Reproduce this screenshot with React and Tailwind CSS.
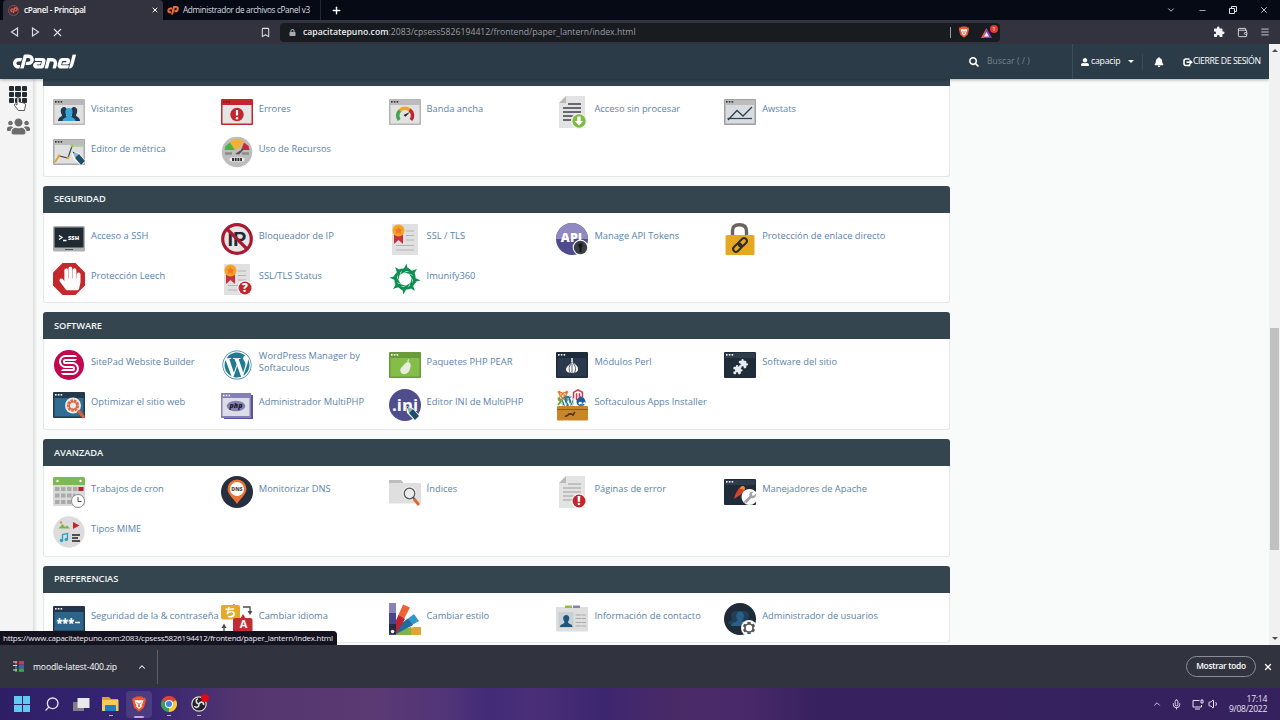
import React from 'react';
import {
  FaWordpress, FaHandPaper, FaUsers, FaSearch, FaBell, FaLock, FaWrench, FaCog,
  FaJoomla, FaMagento, FaDrupal, FaUserAlt,
} from 'react-icons/fa';
import { SiCpanel } from 'react-icons/si';
import { MdExtension } from 'react-icons/md';
import { Bookmark, X, Minus, ChevronDown, ChevronUp, Plus, Menu, Wallet, Mic, Search, Volume1 } from 'lucide-react';

// Small browser window used as the base of many icons
function Win({ frame, bar, body, dots = '#333', children }) {
  return (
    <>
      <rect x="0" y="3" width="32" height="26" rx="1" fill={frame} />
      <rect x="1" y="4" width="30" height="5" fill={bar} />
      <rect x="1.5" y="9" width="29" height="18.5" fill={body} />
      <g fill={dots}>
        <rect x="2" y="5" width="1.6" height="1.6" />
        <rect x="4.8" y="5" width="1.6" height="1.6" />
        <rect x="7.6" y="5" width="1.6" height="1.6" />
      </g>
      {children}
    </>
  );
}

function Sheet({ lines = '#b5b5b5', fold = true }) {
  return (
    <>
      <path d={fold ? 'M10 0H29V32H3V7Z' : 'M4 0H30V32H4Z'} fill="#e3e3e3" />
      {fold && <path d="M10 0V7H3Z" fill="#b9b9b9" />}
      <path d="M12 8H25M7 12H25M7 16H25M7 20H25M7 24H25" stroke={lines} strokeWidth="1.4" />
    </>
  );
}

function Certificate() {
  return (
    <>
      <rect x="3" y="1" width="26" height="31" rx="1" fill="#e0e0e0" />
      <path d="M17 8H25M17 12.500H25M17 17H25M7 22.500H25M7 27H25" stroke="#b3b3b3" strokeWidth="1.2" />
      <path d="M5 10H14V21L9.500 17L5 21Z" fill="#c9303a" />
      <circle cx="9.500" cy="7.500" r="6" fill="#f5a623" />
      <path d="M9.500 3.500L10.800 6.200L13.600 6.400L11.500 8.400L12.200 11.200L9.500 9.700L6.800 11.200L7.500 8.400L5.400 6.400L8.200 6.200Z" fill="#f0762c" />
    </>
  );
}

function Badge({ char }) {
  return (
    <>
      <circle cx="24" cy="25" r="7.600" fill="#fff" />
      <circle cx="24" cy="25" r="6.500" fill="#c4262e" />
      <text x="24" y="29.200" textAnchor="middle" fontSize="11.500" fontWeight="800" fill="#fff">{char}</text>
    </>
  );
}

function Pencil({ x = 0, y = 0 }) {
  return (
    <g transform={`translate(${x} ${y})`}>
      <path d="M19 15L26 17L33 25L28 30L20 22Z" fill="#fff" />
      <path d="M23 20L26 18L32 25L28 29L22 22Z" fill="#1f4e68" />
      <path d="M19.500 15.500L26 18L22 22Z" fill="#8fb3bd" />
      <path d="M19.500 15.500L21.500 16.300L20.300 17.600Z" fill="#20343f" />
    </g>
  );
}

function BraveLogo({ size }) {
  return (
    <svg width={size} height={size} viewBox="0 0 16 16" className="shrink-0">
      <path d="M5 0.500H11L12.500 2L14 1.800L15 4L14.500 5.500L13 11.500L8 15.800L3 11.500L1.500 5.500L1 4L2 1.800L3.500 2Z" fill="#f0562f" />
      <path d="M3.500 4.500L6 4L8 4.500L10 4L12.500 4.500L11.500 7.500L10.500 9L11 10.500L8 13L5 10.500L5.500 9L4.500 7.500Z" fill="#fff" />
      <path d="M5 6L7 7L6.500 8ZM11 6L9 7L9.500 8ZM7.500 7H8.500L9 10.500L8 11.200L7 10.500Z" fill="#f0562f" />
    </svg>
  );
}

function CpIcon({ size, color }) {
  return (
    <svg width={size} height={size} viewBox="0 0 12 12" className="shrink-0" fill="none" stroke={color} strokeWidth="2.1">
      <path d="M5.300 4.500H3.300Q1.800 4.500 1.400 6.200T2.600 8.300H4" />
      <path d="M5 10.500L7 3H9Q11.200 3 10.700 5.200T8.300 7.300H7.300" />
    </svg>
  );
}

const icons = {
  visitors: (
    <Win frame="#b8b8b8" bar="#b8b8b8" body="#e0e0e0">
      <path d="M5 25C5 21 9 21 9 19C6.500 15 8 11 11 11C14 11 15 15 13 19L16 25ZM27 25C27 21 23 21 23 19C25.500 15 24 11 21 11C18 11 17 15 19 19L16 25Z" fill="#20394d" />
      <path d="M9.500 25C9.500 21.500 14 22 14 20C11 16.500 12.500 12 16 12C19.500 12 21 16.500 18 20C18 22 22.500 21.500 22.500 25Z" fill="#35a5dc" />
    </Win>
  ),
  errors: (
    <Win frame="#c4262e" bar="#c4262e" body="#e5e5e5" dots="#7c1419">
      <circle cx="16" cy="18.500" r="6.700" fill="#c4262e" />
      <path d="M16 14V19.500" stroke="#fff" strokeWidth="2.200" />
      <circle cx="16" cy="22.200" r="1.200" fill="#fff" />
    </Win>
  ),
  bandwidth: (
    <Win frame="#b5b5b5" bar="#bcbcbc" body="#e2e2e2">
      <g fill="none" strokeWidth="3.500">
        <path d="M10.200 24A7 7 0 0 1 11 14.500" stroke="#3fa54a" />
        <path d="M11 14.500A7 7 0 0 1 20.500 13.800" stroke="#efa52a" />
        <path d="M20.500 13.800A7 7 0 0 1 22 24" stroke="#c4262e" />
      </g>
      <path d="M14.500 19L21 16L16.500 20.800Z" fill="#222" />
    </Win>
  ),
  rawAccess: (
    <>
      <Sheet lines="#3e434b" />
      <circle cx="23" cy="25" r="8" fill="#f2f2f2" />
      <circle cx="23" cy="25" r="6.700" fill="#7dbb42" />
      <path d="M21.300 20.500H24.700V25H27.100L23 29.500L18.900 25H21.300Z" fill="#fff" />
    </>
  ),
  awstats: (
    <Win frame="#9da1a4" bar="#bcbcbc" body="#d8dce0">
      <path d="M4 24L13 14.500L19 20L28 11" fill="none" stroke="#2e4150" strokeWidth="1.300" />
      <path d="M3.500 22.500H28" stroke="#2e4150" strokeWidth="1.200" />
    </Win>
  ),
  metrics: (
    <>
      <Win frame="#aaa" bar="#bcbcbc" body="#e0e0e0">
        <path d="M2 26L6 20L15 22L19 10" fill="none" stroke="#34495a" strokeWidth="1.200" />
        <path d="M19 10H30" stroke="#8dbb65" />
        <path d="M2 26L6 20" stroke="#f0a52a" strokeWidth="1.500" />
        <circle cx="6" cy="20" r="1.400" fill="#f0a52a" />
        <circle cx="15" cy="22" r="1.400" fill="#f0a52a" />
        <circle cx="19" cy="10" r="1.400" fill="#9fc54a" />
      </Win>
      <Pencil />
    </>
  ),
  resources: (
    <>
      <circle cx="16" cy="16" r="15.300" fill="#bdbdbd" />
      <path d="M3.500 14L4.500 10L9 6.500L14 14Z" fill="#4fae45" />
      <path d="M9 6A12 12 0 0 1 23 5L18 12L14 14Z" fill="#f3b02c" />
      <path d="M23 6.500L27.500 10L28.500 14H20Z" fill="#c92b36" />
      <path d="M14 18L26 10L18 18.500Z" fill="#555" />
      <path d="M4 17.500H11M21 17.500H28" stroke="#8c8c8c" strokeWidth="2.500" />
      <rect x="8.500" y="21.500" width="15" height="4" rx="2" fill="#eee" />
      <path d="M11 23.500H21" stroke="#333" strokeWidth="3" strokeDasharray="2 .7" />
    </>
  ),
  ssh: (
    <>
      <rect y="3" width="32" height="25.500" rx="1.500" fill="#adb1b4" />
      <rect x="1.500" y="4.500" width="29" height="20" fill="#1f2a33" />
      <path d="M12 26.500H20" stroke="#4b5156" />
      <path d="M6 12.500L9 14.500L6 16.500M10 17.500H13.500" stroke="#fff" strokeWidth="1.300" fill="none" />
      <text x="15" y="17.300" fontSize="5.800" fontWeight="800" fill="#fff">SSH</text>
    </>
  ),
  ipBlocker: (
    <>
      <circle cx="16" cy="16" r="14.300" fill="#e9e4e4" />
      <text x="16" y="23.300" textAnchor="middle" fontSize="20" fontWeight="700" fontFamily="'Liberation Sans', sans-serif" fill="#222a35">IP</text>
      <circle cx="16" cy="16" r="14.300" fill="none" stroke="#a61b33" strokeWidth="3.200" />
      <path d="M6 6L26 26" stroke="#a61b33" strokeWidth="3.200" />
    </>
  ),
  ssl: <Certificate />,
  api: (
    <>
      <circle cx="16" cy="16" r="16" fill="#504b8e" />
      <path d="M0 16A16 16 0 0 1 32 16Z" fill="#8f8abf" />
      <text x="15.500" y="19" textAnchor="middle" fontSize="12.500" fontWeight="800" fill="#fff">API</text>
      <circle cx="24.500" cy="24.500" r="7.800" fill="#fff" />
      <circle cx="24.500" cy="24.500" r="6.700" fill="#3a3f46" />
      <circle cx="24.500" cy="22.500" r="2.200" fill="#16181b" />
      <path d="M24.500 23V29" stroke="#16181b" strokeWidth="2" />
    </>
  ),
  hotlink: (
    <>
      <path d="M8.500 14V8Q8.500 1.800 15.500 1.800T22.500 8V14" fill="none" stroke="#6a625e" strokeWidth="3.400" />
      <rect x="1.500" y="12" width="29" height="20" rx="1.500" fill="#e6a823" />
      <g fill="none" stroke="#302b24" strokeWidth="2" transform="translate(16 22) rotate(-45)">
        <rect x="-8.500" y="-2.800" width="9.500" height="5.600" rx="2.800" />
        <rect x="-1" y="-2.800" width="9.500" height="5.600" rx="2.800" />
      </g>
    </>
  ),
  leech: (
    <>
      <path d="M9.500 0H22.500L32 9.500V22.500L22.500 32H9.500L0 22.500V9.500Z" fill="#c4282d" />
      <FaHandPaper x="5" y="3.500" size={24} color="#fff" />
    </>
  ),
  sslStatus: (
    <>
      <Certificate />
      <Badge char="?" />
    </>
  ),
  imunify: (
    <g fill="#0d8f50">
      {[0, 45, 90, 135, 180, 225, 270, 315].map(a => (
        <path key={a} d="M9.500 6L15 5.500L17.500 .5L18.500 5L24 9L17.500 8L10.500 12L13.500 7.500Z" transform={`rotate(${a} 16 16)`} />
      ))}
    </g>
  ),
  sitepad: (
    <>
      <circle cx="16" cy="16" r="15" fill="#c2064f" />
      <g fill="none" strokeLinecap="round">
        <path d="M21 9H12.500A3.500 3.500 0 0 0 12.500 16H19.500A3.500 3.500 0 0 1 19.500 23H11" stroke="#fff" strokeWidth="6" />
        <path d="M25 9H12.500A3.500 3.500 0 0 0 12.500 16H19.500A3.500 3.500 0 0 1 19.500 23H7" stroke="#c2064f" strokeWidth="1.900" />
      </g>
    </>
  ),
  wordpress: (
    <>
      <circle cx="16" cy="16" r="15" fill="#fff" />
      <FaWordpress x="1" y="1" size={30} color="#217b94" />
    </>
  ),
  pear: (
    <Win frame="#6c9a3b" bar="#6c9a3b" body="#83be49" dots="#fff">
      <path d="M18.500 11L20 10L19.500 13C23 15 21.500 18 21 20C20 24 17 25.500 14 25C10.500 24 10.500 19 13.500 17.500C15 16 15.500 14 18.500 13Z" fill="#e9ecdf" />
    </Win>
  ),
  perl: (
    <Win frame="#1e2b3b" bar="#1e2b3b" body="#2b394d" dots="#fff">
      <path d="M16 10V13C20 15.500 22.500 17.500 22 21C21.500 25 10.500 25 10 21C9.500 17.500 14.500 15.500 16 13" fill="#fff" />
      <path d="M16 9V13" stroke="#fff" strokeWidth="1.400" />
      <path d="M15.500 14C12 18 13 22 14.500 24M17 14C20.500 18 20 22 18 24M16 15V24" stroke="#2b394d" strokeWidth=".8" fill="none" />
    </Win>
  ),
  siteSoftware: (
    <Win frame="#1e2b3b" bar="#2e3c4d" body="#202c38" dots="#fff">
      <MdExtension x="8.500" y="15.500" size={10.500} color="#e6ebf3" />
      <MdExtension x="14" y="9.500" size={10.500} color="#e6ebf3" />
    </Win>
  ),
  optimize: (
    <Win frame="#24394a" bar="#24394a" body="#2e6d94" dots="#fff">
      <circle cx="20" cy="16.500" r="8" fill="#e8ecef" />
      <circle cx="20" cy="16.500" r="4.700" fill="none" stroke="#df6b45" strokeWidth="3" strokeDasharray="2.500 .7" />
      <circle cx="20" cy="16.500" r="3.800" fill="none" stroke="#df6b45" strokeWidth="1.400" />
      <path d="M25 21.500L31 28.500" stroke="#df5f35" strokeWidth="3.300" />
    </Win>
  ),
  multiphp: (
    <>
      <rect x="3" y="6" width="29" height="24" fill="#5b5597" />
      <rect y="4" width="30" height="25" fill="#8580b5" />
      <rect x="1.500" y="9" width="27" height="18" fill="#dcdde6" />
      <path d="M2 6.500H10" stroke="#fff" strokeWidth="1.500" strokeDasharray="1.500 1.300" />
      <ellipse cx="15" cy="17" rx="9.300" ry="5.200" fill="#8480b0" />
      <text x="8.500" y="19" textLength="13" lengthAdjust="spacingAndGlyphs" fontSize="7.500" fontWeight="800" fontStyle="italic" fill="#1d1d28">php</text>
    </>
  ),
  ini: (
    <>
      <circle cx="16" cy="16" r="16" fill="#504d8e" />
      <text x="3" y="21.500" textLength="26" lengthAdjust="spacingAndGlyphs" fontSize="16" fontWeight="700" fill="#fff">.ini</text>
      <Pencil x={-2} y={2} />
    </>
  ),
  softaculous: (
    <>
      <FaJoomla x="1" y="1" size={12} color="#e3782d" />
      <FaMagento x="16" y="0" size={12} color="#d0344a" />
      <FaWordpress x="5" y="6" size={13} color="#1e7b96" />
      <FaDrupal x="19" y="6" size={12} color="#1d5c9e" />
      <path d="M2 9L5 12L2 16" stroke="#65ad42" strokeWidth="2" fill="none" />
      <rect x="1" y="17" width="31" height="14.500" rx="1" fill="#c98627" />
      <path d="M1 20.500H32" stroke="#925918" />
      <path d="M9 27C12 28 12 24 15 25C19 26 15 28 19 23" stroke="#44310f" strokeWidth="1.500" fill="none" />
    </>
  ),
  cron: (
    <>
      <rect y="3" width="32" height="27" rx="1.500" fill="#d9d9d9" />
      <path d="M0 9V2.500Q0 1 1.500 1H30.500Q32 1 32 2.500V9Z" fill="#7cb955" />
      <circle cx="4.500" cy="5" r="1.200" fill="#fff" />
      <circle cx="27.500" cy="5" r="1.200" fill="#fff" />
      <g stroke="#aaa" strokeWidth="4" strokeDasharray="4.500 1.500">
        <path d="M2 13H25M2 19.500H22M2 26H18" />
      </g>
      <rect x="25.500" y="11" width="5" height="4" fill="#b61f2b" />
      <circle cx="25" cy="25" r="6.500" fill="#fff" stroke="#85898c" />
      <path d="M25 21V25.500H28.500" stroke="#444" fill="none" />
    </>
  ),
  dns: (
    <>
      <circle cx="16" cy="16" r="16" fill="#272e3d" />
      <path d="M16 28C12 22 6.500 18 6.500 13A9.500 9.500 0 0 1 25.500 13C25.500 18 20 22 16 28Z" fill="#ea7431" />
      <circle cx="16" cy="13" r="7" fill="#fff" />
      <text x="16" y="15" textAnchor="middle" fontSize="5.300" fontWeight="800" fill="#5b4a44">DNS</text>
    </>
  ),
  indices: (
    <>
      <path d="M0 4H12L14 6V12H0Z" fill="#bdbdbd" />
      <rect y="7" width="32" height="20.500" rx="1" fill="#dfdfdf" />
      <circle cx="20.500" cy="17.500" r="7" fill="#efefef" />
      <circle cx="20.500" cy="17.500" r="5.300" fill="#ececec" stroke="#555" strokeWidth="1.200" />
      <path d="M24 21.500L25.500 23" stroke="#555" strokeWidth="2" />
      <path d="M25 23L30 29" stroke="#e2672f" strokeWidth="2.800" />
    </>
  ),
  errorPages: (
    <>
      <Sheet />
      <g transform="translate(-1 0)"><Badge char="!" /></g>
    </>
  ),
  apache: (
    <Win frame="#1e2b3b" bar="#2e3c4d" body="#202c38" dots="#fff">
      <path d="M10 23C11 18 14 12 18 10C20.500 10 21.500 12 20.500 14.500C18 18 14 20.500 10 23Z" fill="#d8402c" />
      <path d="M15.500 12.500L18 10C20.500 9.500 21.500 11.500 20.500 14Z" fill="#f08c2d" />
      <circle cx="25.500" cy="21" r="8" fill="#fff" />
      <g transform="translate(20 27.500) scale(1 -1) rotate(90 6 6) scale(1 1)">
        <FaWrench size={12} color="#a3a3a3" />
      </g>
    </Win>
  ),
  mime: (
    <>
      <circle cx="16" cy="16" r="15.700" fill="#dcdcdc" />
      <path d="M5.500 12.500L9.500 8L12 11L14 9.500L17 12.500Z" fill="#7ab648" />
      <circle cx="8" cy="6.500" r="1.200" fill="#e5913b" />
      <path d="M20 6L26.500 9.500L20 13Z" fill="#c4262e" />
      <path d="M9.500 24V18.500L14.500 17.500V23" stroke="#2fa3c6" strokeWidth="1.400" fill="none" />
      <circle cx="8.500" cy="24.500" r="1.800" fill="#2fa3c6" />
      <circle cx="13.300" cy="23.500" r="1.800" fill="#2fa3c6" />
      <path d="M19 19H27M19 22H25M19 25H27" stroke="#222" strokeWidth="1.600" />
    </>
  ),
  password: (
    <Win frame="#22354c" bar="#22354c" body="#2d6489" dots="#fff">
      <text x="3.500" y="24" textLength="17.500" lengthAdjust="spacingAndGlyphs" fontSize="12" fontWeight="800" fill="#fff">***</text>
      <path d="M22 19.500H27" stroke="#fff" strokeWidth="1.500" />
    </Win>
  ),
  language: (
    <>
      <rect x="0" y="2" width="19" height="14.500" rx="2" fill="#e5a92f" />
      <path d="M13 1V3" stroke="#e5a92f" strokeWidth="2" />
      <text x="9.500" y="13.500" textAnchor="middle" fontSize="12" fill="#fff" fontWeight="700" fontFamily="'Noto Sans CJK JP', sans-serif">ち</text>
      <path d="M22 4H29V9" stroke="#4b4b4b" strokeWidth="1.300" fill="none" />
      <path d="M26.500 8H31.500L29 12Z" fill="#4b4b4b" />
      <rect x="12" y="15" width="19.500" height="16" rx="2" fill="#c12c36" />
      <path d="M22 11L19 16H25Z" fill="#c12c36" />
      <text x="22.500" y="25" textAnchor="middle" fontSize="11" fontWeight="700" fill="#fff">A</text>
      <path d="M3 24V30H10" stroke="#4b4b4b" strokeWidth="1.300" fill="none" />
      <path d="M.5 25H5.500L3 20.500Z" fill="#4b4b4b" />
    </>
  ),
  style: (
    <>
      <path d="M4 29L25 24H32V32H4Z" fill="#e0a52c" />
      <path d="M4 29L22 24V32H4Z" fill="#7db549" />
      <path d="M4 27L25 11L30 18L7 31Z" fill="#3298cc" />
      <path d="M4 27L19 15.500L24 22L7 31Z" fill="#246b9d" />
      <path d="M3 27L14 1.500L21 4.500L7 31Z" fill="#ed6336" />
      <path d="M3 27L9.500 12L16 16L7 31Z" fill="#bd2433" />
      <rect x="0" y="0" width="7" height="32" fill="#8984b8" />
      <rect x="0" y="10" width="7" height="22" fill="#49458b" />
      <path d="M0 21H7V31H3Q0 31 0 28Z" fill="#252b46" />
      <circle cx="3.600" cy="28.500" r="1.800" fill="#fff" />
    </>
  ),
  contact: (
    <>
      <rect x="0" y="4" width="32" height="24.500" rx="1" fill="#dedede" />
      <path d="M9 2.500H16V5H9Z" fill="#9eb643" />
      <path d="M17 2.500H24V5H17Z" fill="#8582b4" />
      <rect x="2.500" y="9" width="15" height="16" fill="#c6d0d6" />
      <path d="M4 24C4 20.500 8.500 21.500 8.500 19C6 15 7.500 12 10.200 12C13 12 14.500 15 12 19C12 21.500 16.500 20.500 16.500 24Z" fill="#1e557b" />
      <path d="M19.500 12H30M19.500 15.500H30M19.500 19.500H30M19.500 23H30" stroke="#a9a9a9" strokeDasharray="6 .5" />
    </>
  ),
  userManager: (
    <>
      <circle cx="16" cy="16" r="16" fill="#1f2b36" />
      <path d="M4 21C4 17 8 18 8 16C6 12 7.500 8 11 8H21C24.500 8 26 12 24 16C24 18 28 17 28 21Z" fill="#203f58" />
      <path d="M7 23C7 18.500 13.500 19.500 13.500 17C11 13 12.500 8.500 16 8.500C19.500 8.500 21.500 13 18.500 17C18.500 19.500 25 18.500 25 23Z" fill="#295e87" />
      <circle cx="25" cy="25" r="8" fill="#fff" />
      <FaCog x="18.500" y="18.500" size={13} color="#585858" />
      <circle cx="25" cy="25" r="3.200" fill="#fff" />
    </>
  ),
};

const sections = [
  {
    title: 'MÉTRICA',
    items: [
      ['visitors', 'Visitantes'], ['errors', 'Errores'], ['bandwidth', 'Banda ancha'],
      ['rawAccess', 'Acceso sin procesar'], ['awstats', 'Awstats'],
      ['metrics', 'Editor de métrica'], ['resources', 'Uso de Recursos'],
    ],
  },
  {
    title: 'SEGURIDAD',
    items: [
      ['ssh', 'Acceso a SSH'], ['ipBlocker', 'Bloqueador de IP'], ['ssl', 'SSL / TLS'],
      ['api', 'Manage API Tokens'], ['hotlink', 'Protección de enlace directo'],
      ['leech', 'Protección Leech'], ['sslStatus', 'SSL/TLS Status'], ['imunify', 'Imunify360'],
    ],
  },
  {
    title: 'SOFTWARE',
    items: [
      ['sitepad', 'SitePad Website Builder'], ['wordpress', 'WordPress Manager by Softaculous'],
      ['pear', 'Paquetes PHP PEAR'], ['perl', 'Módulos Perl'], ['siteSoftware', 'Software del sitio'],
      ['optimize', 'Optimizar el sitio web'], ['multiphp', 'Administrador MultiPHP'],
      ['ini', 'Editor INI de MultiPHP'], ['softaculous', 'Softaculous Apps Installer'],
    ],
  },
  {
    title: 'AVANZADA',
    items: [
      ['cron', 'Trabajos de cron'], ['dns', 'Monitorizar DNS'], ['indices', 'Índices'],
      ['errorPages', 'Páginas de error'], ['apache', 'Manejadores de Apache'], ['mime', 'Tipos MIME'],
    ],
  },
  {
    title: 'PREFERENCIAS',
    short: true,
    items: [
      ['password', 'Seguridad de la & contraseña'], ['language', 'Cambiar idioma'], ['style', 'Cambiar estilo'],
      ['contact', 'Información de contacto'], ['userManager', 'Administrador de usuarios'],
    ],
  },
];

function Section({ title, items, first, short }) {
  return (
    <section className="mb-[9.2px]">
      {first ? (
        <div className="h-[7px] bg-[#33434f]" />
      ) : (
        <h2 className="flex h-[27px] items-center rounded-t-[3px] bg-[#34454f] pl-[11px] text-[9.33px] font-semibold tracking-[-0.12px] text-[#f2f5f7]">
          {title}
        </h2>
      )}
      <div className={`grid grid-cols-[repeat(5,167.8px)] content-start rounded-b-[3px] border border-t-0 border-[#e6e6e6] bg-white pl-[9px] pt-[10px] ${short ? 'h-[50px]' : 'h-[90.5px]'}`}>
        {items.map(([icon, label]) => (
          <a key={icon} className="flex h-10 gap-[6px]">
            <svg className="h-8 w-8 shrink-0 overflow-visible" viewBox="0 0 32 32">{icons[icon]}</svg>
            <span className={`flex h-[26px] items-center text-[9.33px] leading-[12px] text-[#5a83a9] ${label.includes('&') ? 'whitespace-nowrap' : ''}`}>
              {label}
            </span>
          </a>
        ))}
      </div>
    </section>
  );
}

function TabBar() {
  return (
    <div className="flex h-5 shrink-0 items-stretch bg-[#060a14] text-[8.2px] text-[#dcdee3]">
      <div className="ml-[3px] flex w-[160px] items-center rounded-t-sm bg-[#32333f] pl-[5px] pr-1">
        <span className="flex h-[11px] w-[11px] items-center justify-center rounded-full border border-[#9c4845]">
          <CpIcon size={8} color="#e0604e" />
        </span>
        <span className="ml-[5px] grow whitespace-nowrap font-semibold tracking-[-0.33px] text-white">cPanel - Principal</span>
        <X size={8} strokeWidth={3} color="#fff" />
      </div>
      <div className="flex w-[158px] items-center border-r border-[#242831] pl-1">
        <CpIcon size={12} color="#ee6a32" />
        <span className="ml-1 whitespace-nowrap tracking-[-0.34px]">Administrador de archivos cPanel v3</span>
      </div>
      <Plus className="ml-[10px] self-center" size={11} strokeWidth={3} color="#fff" />
      <div className="ml-auto flex items-center gap-[22px] pr-[11px]">
        <ChevronDown size={10} />
        <Minus size={9} />
        <svg width="8" height="8" viewBox="0 0 8 8" fill="none" stroke="#dcdee3"><path d="M2.500 2V.5H7.500V5.500H6M.5 2.500H5.500V7.500H.5Z" /></svg>
        <X size={10} />
      </div>
    </div>
  );
}

function Toolbar() {
  return (
    <div className="flex h-6 shrink-0 items-center bg-[#32333f] text-[8.7px] text-[#e0e1e6]">
      <svg className="ml-[10px]" width="9" height="10" viewBox="0 0 9 10" fill="none" stroke="#d8dae0" strokeWidth="1.2"><path d="M7.500 1V9L1.500 5Z" /></svg>
      <svg className="ml-[12px]" width="9" height="10" viewBox="0 0 9 10" fill="none" stroke="#d8dae0" strokeWidth="1.2"><path d="M1.500 1V9L7.500 5Z" /></svg>
      <X className="ml-[11px]" size={13} strokeWidth={2} />
      <Bookmark className="ml-[196px]" size={11} strokeWidth={2.2} />
      <div className="ml-[9px] flex h-[19px] w-[720px] items-center rounded-sm bg-[#181b20] pl-[9px] pr-[2px]">
        <FaLock size={7} color="#a9acb2" />
        <span className="ml-[7px] whitespace-nowrap pt-px text-[#9b9ea5]">
          <b className="font-semibold text-[#eceef1]">capacitatepuno.com</b>:2083/cpsess5826194412/frontend/paper_lantern/index.html
        </span>
        <span className="ml-auto mr-[7px] h-[11px] w-px bg-[#9b9ca1]" />
        <BraveLogo size={12} />
        <span className="relative ml-[11px] h-[14px] w-[17px]">
          <svg className="absolute left-0 top-[3px]" width="11" height="10" viewBox="0 0 11 10">
            <path d="M5.500 0L11 10H0Z" fill="#8b3eb3" />
            <path d="M5.500 0L3 10H0Z" fill="#f05a38" />
            <path d="M5.500 4L8 8.500H3Z" fill="#fff" />
          </svg>
          <span className="absolute right-0 top-0 flex h-[8px] w-[8px] items-center justify-center rounded-full bg-[#e3392f] text-[6px] text-white">1</span>
        </span>
      </div>
      <div className="ml-auto flex items-center gap-[12px] pr-[10px]">
        <MdExtension size={12} color="#f1f2f5" />
        <Wallet size={11} />
        <Menu size={10} />
      </div>
    </div>
  );
}

function Header() {
  return (
    <header className="relative z-10 flex h-[35px] shrink-0 items-center overflow-y-clip bg-[#2b3b48] text-[8.7px] text-white shadow-[0_1px_3px_rgba(0,0,0,0.3)]">
      <SiCpanel className="ml-[13px] shrink-0" size={63} title="cPanel" />
      <div className="ml-auto flex h-full items-center">
        <FaSearch size={10} />
        <span className="ml-[8px] w-[85px] text-[#778490]">Buscar ( / )</span>
        <div className="flex h-full items-center border-l border-[#3b4c5a] pl-[8px]">
          <FaUserAlt size={8} />
          <span className="ml-[2px] w-[29px] whitespace-nowrap tracking-[-0.2px]">capacip</span>
          <span className="ml-[8px] h-0 w-0 border-x-[3px] border-t-[3px] border-x-transparent border-t-white" />
        </div>
        <div className="ml-[8px] h-4 w-px bg-[#3b4c5a]" />
        <FaBell className="ml-[11px]" size={10} />
        <svg className="ml-[19px]" width="10" height="10" viewBox="0 0 10 10" fill="none" stroke="#fff" strokeWidth="1.6">
          <path d="M6.500 2H3Q1 2 1 4V6.500Q1 8.500 3 8.500H6.500V7" />
          <path d="M3.500 5.200H7" />
          <path d="M6.500 2.300L9.800 5.200L6.500 8Z" fill="#fff" stroke="none" />
        </svg>
        <span className="w-[76px] whitespace-nowrap tracking-[-0.4px]">CIERRE DE SESIÓN</span>
      </div>
    </header>
  );
}

function Sidebar() {
  return (
    <aside className="relative flex w-[34px] shrink-0 flex-col items-center border-r border-[#e0e0e0] bg-[#f4f4f4] pr-0 pt-[7px] shadow-[1px_0_3px_rgba(0,0,0,0.12)]">
      <div className="ml-[3px] grid grid-cols-3 gap-[1.5px]">
        {[...Array(9)].map((_, i) => <span key={i} className="h-[4.5px] w-[5.3px] rounded-[1px] bg-[#232b33]" />)}
      </div>
      <FaUsers className="ml-[3px] mt-[12px]" size={23} color="#6c6c6c" />
      {/* mouse pointer */}
      <svg className="absolute left-[13px] top-[17px]" width="14" height="16" viewBox="0 0 14 16">
        <path d="M4 9V2Q4 1 5 1T6 2V6L11 7Q12.500 7.500 12.500 9L11.500 14.500H5.500L1.500 9.500Q1 8 2.500 8Z" fill="#fff" stroke="#333" strokeWidth=".8" />
      </svg>
    </aside>
  );
}

function DownloadBar() {
  return (
    <div className="flex h-[43px] shrink-0 items-center bg-[#31343f] text-[8.6px] text-white">
      <svg className="ml-[13px]" width="11" height="11" viewBox="0 0 11 11">
        <rect x="2" width="9" height="3.500" fill="#c33c55" />
        <rect x="2" y="3.700" width="9" height="3.500" fill="#3b65b0" />
        <rect x="2" y="7.400" width="9" height="3.500" fill="#3f9d57" />
        <path d="M0 1H4M0 4.500H4M0 9H4" stroke="#d8d8ca" />
        <path d="M5 0V11" stroke="#3a2c2b" strokeWidth="1.5" />
      </svg>
      <span className="ml-[9px] w-[84px] whitespace-nowrap pt-px tracking-[-0.12px]">moodle-latest-400.zip</span>
      <ChevronUp className="ml-[20px]" size={10} strokeWidth={2.5} />
      <span className="ml-[10px] h-[34px] w-px bg-[#5b5e69]" />
      <span className="ml-auto flex h-[21px] w-[70px] items-center justify-center rounded-full border border-[#8b8e99] text-[8.4px] font-semibold tracking-[-0.3px]">
        Mostrar todo
      </span>
      <X className="ml-[7px] mr-[7px]" size={10} strokeWidth={3} />
    </div>
  );
}

function Taskbar() {
  return (
    <footer className="flex h-8 shrink-0 items-center bg-[linear-gradient(90deg,#2d1f66_0%,#382673_12%,#54366f_19%,#5b3973_29%,#513578_35%,#432b78_38%,#4a2e78_42%,#3d2670_47%,#4a2a66_53%,#49296a_58%,#37215f_64%,#36215f_100%)] text-[8.5px] text-[#e7e2f2]">
      <div className="ml-[14px] grid w-4 grid-cols-2 gap-px">
        {[...Array(4)].map((_, i) => <span key={i} className="h-[7.5px] bg-[#63c8f2]" />)}
      </div>
      <Search className="ml-[14px] -scale-x-100" size={16} strokeWidth={2} />
      <svg className="ml-[13px]" width="17" height="15" viewBox="0 0 17 15">
        <rect y="5" width="11" height="9" fill="#817b8b" />
        <rect x="4.500" y="1" width="12" height="10" fill="#e8e7ea" />
      </svg>
      <div className="relative ml-[12px] flex h-full w-[18px] items-center">
        <svg width="17" height="16" viewBox="0 0 17 16">
          <path d="M0 1H7L9 3H16V6H0Z" fill="#dba52b" />
          <path d="M0 4H16.500V15H0Z" fill="#f5cc54" />
          <path d="M3 15V10Q3 9 4 9H13Q14 9 14 10V15Z" fill="#237fbd" />
        </svg>
        <span className="absolute bottom-[4px] left-[7px] h-px w-[4px] bg-[#b9aec8]" />
      </div>
      <div className="relative ml-[6px] flex h-[27px] w-[26px] items-center justify-center rounded-sm bg-white/10">
        <BraveLogo size={16} />
        <span className="absolute bottom-0 h-[2px] w-[10px] rounded bg-[#c9a4df]" />
      </div>
      <div className="relative ml-[9px] flex h-full w-4 items-center">
        <svg width="16" height="16" viewBox="0 0 16 16">
          <path d="M8 8L1.070 4A8 8 0 0 1 14.930 4Z" fill="#df4335" />
          <path d="M8 8V16A8 8 0 0 1 1.070 4Z" fill="#35a157" />
          <path d="M8 8L14.930 4A8 8 0 0 1 8 16Z" fill="#f7c935" />
          <circle cx="8" cy="8" r="4" fill="#fff" />
          <circle cx="8" cy="8" r="3" fill="#4083e4" />
        </svg>
        <span className="absolute bottom-[4px] left-[6px] h-px w-[4px] bg-[#b9aec8]" />
      </div>
      <div className="relative ml-[14px] flex h-full w-[18px] items-center">
        <svg width="16" height="16" viewBox="0 0 16 16" fill="none" stroke="#ddd">
          <circle cx="8" cy="8" r="7.200" fill="#24212c" strokeWidth="1.2" />
          <path d="M8 8C4 7 5 3 7 3M8 8C10 4.500 13 6.500 12.500 9M8 8C8 12 4.500 12 3.500 10" strokeWidth="1.6" />
        </svg>
        <span className="absolute right-0 top-[6px] h-[8px] w-[8px] rounded-full bg-[#e30613]" />
        <span className="absolute bottom-[4px] left-[6px] h-px w-[4px] bg-[#b9aec8]" />
      </div>
      <div className="ml-auto flex items-center pr-[13px]">
        <ChevronUp size={10} />
        <Mic className="ml-[9px]" size={11} />
        <svg className="ml-[10px]" width="12" height="11" viewBox="0 0 12 11" fill="none" stroke="#e7e2f2">
          <path d="M7.500 1.500H1V8H9.500V6M3 10H8M9 1H11V4H9Z" />
        </svg>
        <Volume1 className="ml-[4px]" size={12} />
        <div className="ml-[6px] w-[41px] whitespace-nowrap text-right leading-[10.5px] tracking-[-0.25px]">
          <div>17:14</div>
          <div>9/08/2022</div>
        </div>
      </div>
    </footer>
  );
}

function App() {
  return (
    <div className="flex h-[720px] w-[1280px] flex-col overflow-hidden font-['Open_Sans','Noto_Sans',sans-serif]">
      <TabBar />
      <Toolbar />
      <div className="relative flex h-[601px] shrink-0">
        <div className="flex w-[1269px] flex-col overflow-hidden">
          <Header />
          <div className="flex min-h-0 grow bg-[#f9fafa]">
            <Sidebar />
            <main className="ml-[9px] w-[907px]">
              {sections.map((s, i) => <Section key={s.title} {...s} first={i === 0} />)}
            </main>
          </div>
        </div>
        <div className="flex w-[11px] flex-col items-center bg-[#f1f1f1]">
          <span className="mt-[5px] h-0 w-0 border-x-[3px] border-b-[3px] border-x-transparent border-b-[#505050]" />
          <span className="mt-[276px] h-[222px] w-[9px] bg-[#c1c1c1]" />
          <span className="mb-[5px] mt-auto h-0 w-0 border-x-[3px] border-t-[3px] border-x-transparent border-t-[#505050]" />
        </div>
        <div className="absolute bottom-0 left-0 z-20 flex h-[14px] w-[337px] items-center whitespace-nowrap rounded-tr-sm bg-[#14121f] pl-[3px] text-[8px] tracking-[-0.25px] text-[#eceaf0]">
          https://www.capacitatepuno.com:2083/cpsess5826194412/frontend/paper_lantern/index.html
        </div>
      </div>
      <DownloadBar />
      <Taskbar />
    </div>
  );
}

export default App;
